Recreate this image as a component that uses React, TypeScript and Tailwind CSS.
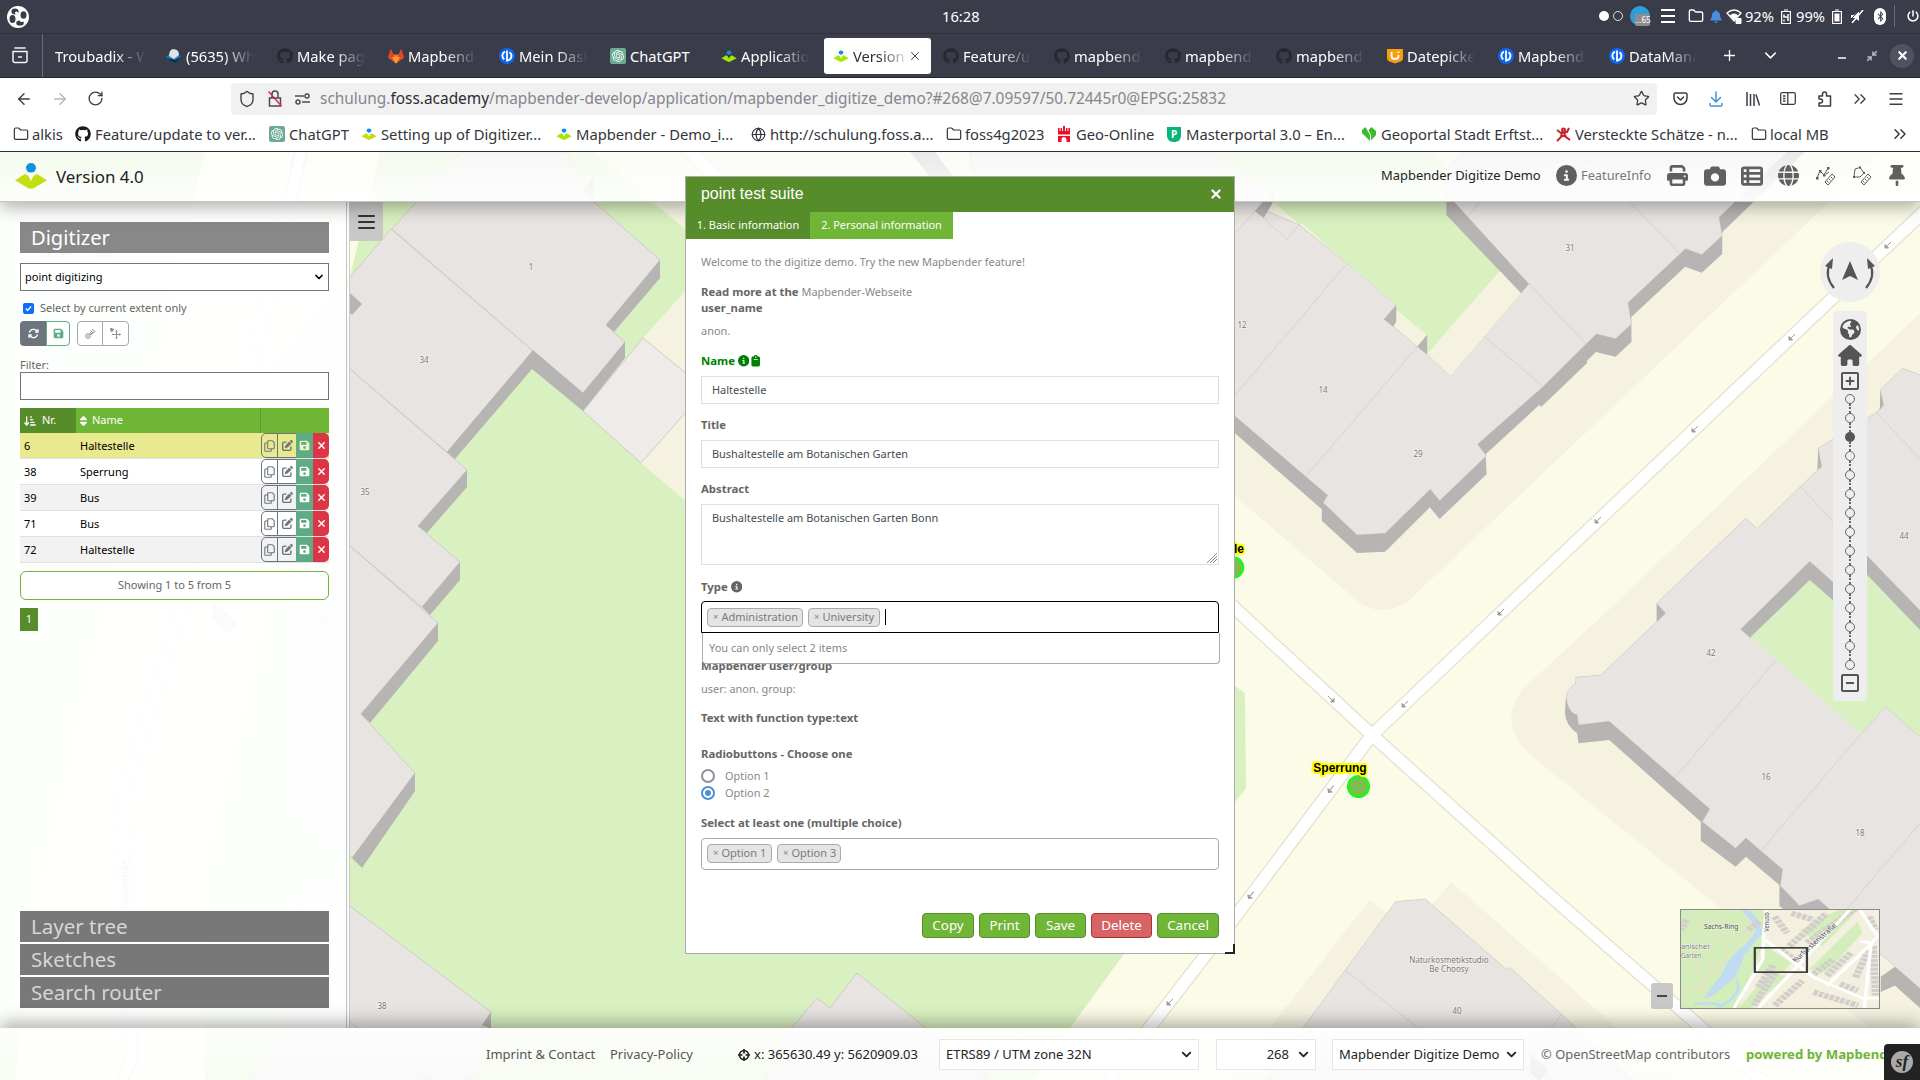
import React from "react";
import {
  FaPrint, FaCamera, FaTableList, FaGlobe, FaThumbtack, FaCircleInfo, FaEarthAmericas, FaHouse,
  FaArrowsRotate, FaFloppyDisk, FaArrowDownShortWide, FaSort, FaPenToSquare, FaXmark,
  FaClipboard, FaGithub, FaPowerOff, FaBell, FaBluetoothB,
} from "react-icons/fa6";
import { SiOpenai } from "react-icons/si";
import {
  ArrowLeft, ArrowRight, RotateCw, Shield, Star, Folder, Globe, ChevronDown, ChevronsRight, Menu,
  Plus, X, Minimize2,
} from "lucide-react";

/* ---------- small logos ---------- */

function MapbenderLogo({ className, lime = "#a2e800" }: { className: string; lime?: string }) {
  return (
    <svg viewBox="0 0 34 28" className={className} preserveAspectRatio="none">
      <path d="M1 19 L11 12.5 Q15 14 16 18 L17 20 L18 18 Q19 14 23 12.5 L33 19 L20 27 Q17 28.5 14 27 Z" fill={lime} />
      <circle cx="17" cy="6" r="5" fill="#0a93dd" />
    </svg>
  );
}

function GitlabLogo() {
  return (
    <svg viewBox="0 0 16 16" className="h-4 w-4">
      <path d="M8 15.5 L.3 9.6 L2.8 1 L5.2 6.4 H10.8 L13.2 1 L15.7 9.6 Z" fill="#fc6d26" />
      <path d="M8 15.5 L5.2 6.4 L2.8 1 L.3 8 Z" fill="#e24329" />
      <path d="M8 15.5 L10.8 6.4 L13.2 1 L15.7 8 Z" fill="#e24329" />
      <path d="M8 15.5 L4 9.6 L8 8.2 L12 9.6 Z" fill="#fca326" />
    </svg>
  );
}

function DashLogo() {
  return (
    <svg viewBox="0 0 16 16" className="h-4 w-4">
      <circle cx="8" cy="8" r="8" fill="#0b66f0" />
      <path d="M8 3.2 V12.8" stroke="#fff" strokeWidth="1.8" strokeLinecap="round" />
      <path d="M6 3.600 A4.500 4.500 0 0 0 5.3 11.4 M10.5 4.2 A4.500 4.500 0 0 1 8 12.4" stroke="#fff" strokeWidth="1.9" fill="none" />
    </svg>
  );
}

function ChatLogo() {
  return (
    <span className="flex h-4 w-4 items-center justify-center rounded-[2px] bg-[#6bab94] text-[12px] text-white">
      <SiOpenai />
    </span>
  );
}

function PickerLogo() {
  return (
    <svg viewBox="0 0 16 16" className="h-4 w-4">
      <path d="M0 1 H16 V10 Q16 13 12 14 L8 15.5 L4 14 Q0 13 0 10 Z" fill="#f99d0b" />
      <path d="M4.5 4 V8 Q4.5 11 8 11 Q11.5 11 11.5 8 V7 M11.5 3.6 V5" stroke="#fff" strokeWidth="2" fill="none" />
    </svg>
  );
}

function MailLogo() {
  return (
    <svg viewBox="0 0 16 16" className="h-4 w-4">
      <path d="M0 9 L5 5 L15 8 L9 15 Z" fill="#0e7fc4" />
      <path d="M1 10 L9 15 L15 9 L9 12 Z" fill="#0b2b44" />
      <path d="M3 8 Q3 2 7 1 Q13 1 13 7 L8 11 Z" fill="#dfe3e8" />
    </svg>
  );
}

function CastleLogo() {
  return (
    <svg viewBox="0 0 14 16" className="h-4 w-3.5" fill="#f00d27">
      <path d="M1 2h1.500v3h1V2h1.500v3h1V0h2v5h1V2h1.500v3h1V2H13v6.500H1zM1 10h12v6H9.500v-2.500a2.500 2.500 0 0 0-5 0V16H1z" />
    </svg>
  );
}

/* ---------- desktop and browser bars ---------- */

function SystemBar() {
  return (
    <div className="flex h-[34px] items-center border-b border-[#2d303d] bg-[#3a3c4a] text-[14.7px] text-white">
      <div className="flex w-[942px] items-center pl-[7px]">
        <svg viewBox="0 0 22 22" className="h-[22px] w-[22px]">
          <circle cx="11" cy="11" r="11" fill="#fff" />
          <g fill="#3a3c4a">
            <ellipse cx="8" cy="5.500" rx="3.600" ry="3" />
            <ellipse cx="16.500" cy="9" rx="3" ry="3.800" />
            <ellipse cx="5.500" cy="13" rx="3" ry="4" />
            <ellipse cx="13" cy="17" rx="3.800" ry="2.600" />
          </g>
          <circle cx="9.500" cy="7" r="1.600" fill="#fff" />
          <circle cx="14.500" cy="14.500" r="1.600" fill="#fff" />
        </svg>
      </div>
      <div>16:28</div>
      <div className="flex flex-1 items-center justify-end">
        <span className="h-[10px] w-[10px] rounded-full bg-white" />
        <span className="ml-[4px] h-[10px] w-[10px] rounded-full border border-white/80" />
        <span className="relative ml-[7px] h-[20px] w-[20px] rounded-full bg-[#2c9fd4]">
          <span className="absolute top-[8px] left-[5px] h-[12px] w-[15px] rounded-[2px] bg-[#8d8d8d] text-[8px] leading-[12px] text-white">...65</span>
        </span>
        <span className="ml-[11px] flex w-[14px] flex-col gap-[4px]">
          <i className="h-[2px] bg-white" /><i className="h-[2px] bg-white" /><i className="h-[2px] bg-white" />
        </span>
        <Folder className="ml-[13px] h-[16px] w-[16px]" strokeWidth={2} />
        <FaBell className="ml-[6px] h-[13px] w-[12px] text-[#4a8fdc]" />
        <svg viewBox="0 0 16 15" className="ml-[4px] h-[15px] w-[16px]" fill="none" stroke="#fff">
          <path d="M1 4 Q8 -2 15 4 L8 12 Z" strokeWidth="1.300" />
          <path d="M4 6.500 Q8 3 12 6.500 L8 11 Z" fill="#fff" strokeWidth=".5" />
          <path d="M10 9.500 h5 v5 h-5z" fill="#fff" />
        </svg>
        <span className="ml-[3px]">92%</span>
        <svg viewBox="0 0 10 15" className="ml-[7px] h-[15px] w-[10px]" fill="none" stroke="#fff">
          <path d="M.6 2.500 h8.800 v12 H.6z M3 1 h4" strokeWidth="1.200" />
          <path d="M3 5.500 v2.500 h4 v4 M7 5 v2 M3 10.500 v2" strokeWidth="1.500" />
        </svg>
        <span className="ml-[5px]">99%</span>
        <svg viewBox="0 0 10 15" className="ml-[7px] h-[15px] w-[10px]" fill="none" stroke="#fff">
          <path d="M.6 2.500 h8.800 v12 H.6z M3 1 h4" strokeWidth="1.200" />
          <path d="M2.500 4.500 h5 v8 h-5z" fill="#fff" stroke="none" />
        </svg>
        <svg viewBox="0 0 13 13" className="ml-[9px] h-[13px] w-[13px]" fill="#fff">
          <path d="M0 5 h3 L8 1 V11 L4 8 H0z" />
          <path d="M12 0 L1 13" stroke="#fff" strokeWidth="1.500" />
          <path d="M0 9 L9 0" stroke="#3a3c4a" strokeWidth="1" />
        </svg>
        <span className="ml-[10px] flex h-[17px] w-[12px] items-center justify-center rounded-full bg-white text-[11px] text-[#3a3c4a]"><FaBluetoothB /></span>
        <span className="ml-[8px] h-[22px] w-px bg-[#6a6c78]" />
        <FaPowerOff className="ml-[12px] h-[12px] w-[12px]" />
        <span className="w-px" />
      </div>
    </div>
  );
}

const tabs: { label: string; icon: React.ReactNode; active?: boolean }[] = [
  { label: "Troubadix - Web", icon: null },
  { label: "(5635) WhatsApp", icon: <MailLogo /> },
  { label: "Make page work", icon: <FaGithub className="h-4 w-4 text-[#24292e]" /> },
  { label: "Mapbender", icon: <GitlabLogo /> },
  { label: "Mein Dashboard", icon: <DashLogo /> },
  { label: "ChatGPT", icon: <ChatLogo /> },
  { label: "Applications", icon: <MapbenderLogo className="h-3 w-4" /> },
  { label: "Version 4.0", icon: <MapbenderLogo className="h-3 w-4" />, active: true },
  { label: "Feature/update", icon: <FaGithub className="h-4 w-4 text-[#24292e]" /> },
  { label: "mapbender", icon: <FaGithub className="h-4 w-4 text-[#24292e]" /> },
  { label: "mapbender", icon: <FaGithub className="h-4 w-4 text-[#24292e]" /> },
  { label: "mapbender", icon: <FaGithub className="h-4 w-4 text-[#24292e]" /> },
  { label: "Datepicker", icon: <PickerLogo /> },
  { label: "Mapbender", icon: <DashLogo /> },
  { label: "DataManager", icon: <DashLogo /> },
];

function TabBar() {
  return (
    <div className="flex h-[44px] items-center border-b border-[#23252f] bg-[#3a3c4a] text-[14.7px] text-white">
      <div className="flex h-full w-[43px] items-center border-r border-[#6b6d78] pl-[12px]">
        <svg viewBox="0 0 16 17" className="h-[17px] w-[16px]" fill="none" stroke="#f3f3f5" strokeWidth="1.500" strokeLinecap="round" strokeLinejoin="round">
          <path d="M3 1 h10 M1 4.500 h14 v9 a2 2 0 0 1 -2 2 H3 a2 2 0 0 1 -2 -2z M6.500 10 h3" />
        </svg>
      </div>
      <div className="flex pl-[2px]">
        {tabs.map((t, i) => (
          <div key={i} className="w-[111px] px-[2px]">
            <div className={t.active ? "flex h-[36px] items-center rounded-[3px] bg-white pl-[9px] text-[#2f303a]" : "flex h-[36px] items-center pl-[8px]"}>
              {t.icon && <span className="mr-[4px] flex w-4 shrink-0 justify-center">{t.icon}</span>}
              <span className={t.active
                ? "w-[53px] overflow-hidden pt-[2px] [mask-image:linear-gradient(90deg,#000_50%,transparent_108%)] whitespace-nowrap"
                : t.label === "ChatGPT" ? "pt-[2px] whitespace-nowrap"
                : t.icon ? "w-[68px] overflow-hidden pt-[2px] [mask-image:linear-gradient(90deg,#000_55%,transparent_100%)] whitespace-nowrap"
                : "w-[91px] overflow-hidden pt-[2px] [mask-image:linear-gradient(90deg,#000_65%,transparent_100%)] whitespace-nowrap"}>{t.label}</span>
              {t.active && <X className="ml-[2px] h-[14px] w-[14px] shrink-0" strokeWidth={1.6} />}
            </div>
          </div>
        ))}
      </div>
      <Plus className="ml-[11px] h-[17px] w-[17px]" strokeWidth={1.8} />
      <ChevronDown className="ml-[23px] h-[19px] w-[19px]" strokeWidth={1.8} />
      <div className="flex flex-1 items-center justify-end pr-[6px]">
        <span className="mt-[4px] h-[2px] w-[8px] bg-[#c8c9ce]" />
        <Minimize2 className="ml-[20px] h-[12px] w-[12px] text-[#b9bac1]" strokeWidth={3} />
        <span className="ml-[12px] flex h-[24px] w-[24px] items-center justify-center rounded-full bg-[#50525f]"><X className="h-[13px] w-[13px]" strokeWidth={4} /></span>
      </div>
    </div>
  );
}

function AddressBar() {
  return (
    <div className="flex h-[41px] items-center bg-white text-[#3c3d46]">
      <ArrowLeft className="ml-[15px] h-[18px] w-[18px]" strokeWidth={1.9} />
      <ArrowRight className="ml-[18px] h-[18px] w-[18px] text-[#b5b5b9]" strokeWidth={1.9} />
      <RotateCw className="ml-[18px] h-[17px] w-[17px]" strokeWidth={1.9} />
      <div className="ml-[127px] flex h-[32px] w-[1426px] items-center rounded-[4px] bg-[#f1f1f2]">
        <Shield className="ml-[7px] h-[18px] w-[18px]" strokeWidth={1.8} />
        <svg viewBox="0 0 14 17" className="ml-[12px] h-[17px] w-[14px]" fill="none" stroke="#4b4c55" strokeWidth="1.500">
          <path d="M1.500 8 h11 v8 h-11z M4 8 V4 a3 3 0 0 1 6 0 V8" />
          <path d="M.5 1.500 L13.500 16" stroke="#e22850" />
        </svg>
        <svg viewBox="0 0 15 12" className="ml-[13px] h-[12px] w-[15px]" fill="none" stroke="#4b4c55" strokeWidth="1.500">
          <path d="M0 3 h9 M7 9 h8" /><circle cx="12" cy="3" r="2" /><circle cx="3" cy="9" r="2" />
        </svg>
        <span className="ml-[10px] flex-1 text-[15.42px] whitespace-nowrap text-[#85868c]">schulung.<span className="text-[#2c2d35]">foss.academy</span>/mapbender-develop/application/mapbender_digitize_demo?#268@7.09597/50.72445r0@EPSG:25832</span>
        <Star className="mr-[7px] h-[17px] w-[17px]" strokeWidth={1.8} />
      </div>
      <svg viewBox="0 0 15 14" className="ml-[16px] h-[14px] w-[15px]" fill="none" stroke="#3c3d46" strokeWidth="1.500" strokeLinecap="round" strokeLinejoin="round">
        <path d="M2.500 1 h10 a1.500 1.500 0 0 1 1.500 1.500 V6 a6.500 6.500 0 0 1 -13 0 V2.500 A1.500 1.500 0 0 1 2.500 1z M4.500 5 l3 3 l3 -3" />
      </svg>
      <svg viewBox="0 0 14 16" className="ml-[21px] h-[16px] w-[14px]" fill="none" stroke="#4a90d9" strokeWidth="1.500" strokeLinecap="round" strokeLinejoin="round">
        <path d="M7 1 V10.500 M2.500 6.500 L7 11 L11.500 6.500 M1 12.500 V14 a1 1 0 0 0 1 1 H12 a1 1 0 0 0 1 -1 V12.500" />
      </svg>
      <svg viewBox="0 0 14 14" className="ml-[23px] h-[14px] w-[14px]" fill="none" stroke="#3c3d46" strokeWidth="1.500">
        <path d="M1 0 V14 M4.500 2 V14 M8 2 V14 M10 2.500 L13.500 13.500" />
      </svg>
      <svg viewBox="0 0 16 13" className="ml-[20px] h-[13px] w-[16px]" fill="none" stroke="#3c3d46" strokeWidth="1.300">
        <rect x=".7" y=".7" width="14.600" height="11.600" rx="1.500" /><path d="M7.800 1 V12 M3 4 h2.500 M3 6.500 h2.500 M3 9 h2.500" />
      </svg>
      <svg viewBox="0 0 15 16" className="ml-[21px] h-[16px] w-[15px]" fill="none" stroke="#3c3d46" strokeWidth="1.500" strokeLinejoin="round">
        <path d="M5.500 5 V3 a2 2 0 0 1 4 0 V5 H13.500 V15 H2 V12 H3.500 a2 2 0 0 0 0 -4 H2 V5 Z" />
      </svg>
      <ChevronsRight className="ml-[18px] h-[20px] w-[20px]" strokeWidth={1.6} />
      <Menu className="ml-[17px] h-[18px] w-[18px]" strokeWidth={1.7} />
    </div>
  );
}

function BookmarkBar() {
  const f = <Folder className="h-[16px] w-[16px]" strokeWidth={1.8} />;
  return (
    <div className="flex h-[33px] items-center border-b border-[#2c2e3a] bg-white pb-[2px] pl-[13px] text-[14.75px] whitespace-nowrap text-[#33343c]">
      <span className="flex w-[62px] items-center gap-[3px]">{f}alkis</span>
      <span className="flex w-[194px] items-center gap-[4px]"><FaGithub className="h-4 w-4 text-[#1a1a1a]" />Feature/update to ver...</span>
      <span className="flex w-[92px] items-center gap-[4px]"><ChatLogo />ChatGPT</span>
      <span className="flex w-[195px] items-center gap-[4px]"><MapbenderLogo className="h-3 w-4" lime="#c3df10" />Setting up of Digitizer...</span>
      <span className="flex w-[195px] items-center gap-[4px]"><MapbenderLogo className="h-3 w-4" />Mapbender - Demo_i...</span>
      <span className="flex w-[195px] items-center gap-[4px]"><Globe className="h-[15px] w-[15px]" strokeWidth={1.9} />http://schulung.foss.a...</span>
      <span className="flex w-[111px] items-center gap-[3px]">{f}foss4g2023</span>
      <span className="flex w-[110px] items-center gap-[5px]"><CastleLogo />Geo-Online</span>
      <span className="flex w-[195px] items-center gap-[5px]">
        <span className="flex h-[15px] w-[14px] items-center justify-center rounded-b-[6px] bg-[#08b479] text-[10px] font-bold text-white">P</span>Masterportal 3.0 – En...
      </span>
      <span className="flex w-[194px] items-center gap-[5px]">
        <svg viewBox="0 0 14 14" className="h-[14px] w-[14px]" fill="#3bbb2d"><path d="M0 3 L3.500 0 L8 8 V14 L0 6z M6.500 3 L9.500 0 L14 4 V8 L9 13.500 V8z" /></svg>Geoportal Stadt Erftst...
      </span>
      <span className="flex w-[195px] items-center gap-[4px]">
        <svg viewBox="0 0 15 15" className="h-[15px] w-[15px]" fill="none" stroke="#c8232c" strokeWidth="2"><path d="M1 3 L5 6 L11 5 L13 1 M6 5 L5 10 L1 14 M8 6 L10 10 L14 13 M5 9 H10" /><circle cx="7.500" cy="3" r="1.500" /></svg>Versteckte Schätze - n...
      </span>
      <span className="flex items-center gap-[3px]">{f}local MB</span>
      <ChevronsRight className="mr-[10px] ml-auto h-[20px] w-[20px]" strokeWidth={1.7} />
    </div>
  );
}

/* ---------- map ---------- */

const GREEN = "#d9f1c0";
const CREAM = "#f5f3e0";
const HOUSE = "#e8e4e1";
const SHADE = "#b7b5b3";
const EDGE = "#cfcbc7";

const numbers: [number, number, string][] = [
  [531, 267, "1"], [424, 360, "34"], [365, 492, "35"], [382, 1006, "38"], [1242, 325, "12"], [1323, 390, "14"],
  [1418, 454, "29"], [1570, 248, "31"], [1904, 536, "44"], [1711, 653, "42"], [1766, 777, "16"], [1860, 833, "18"],
  [1457, 1011, "40"], [323, 620, "36"],
];

const arrows: [number, number, number][] = [
  [1888, 245, 0], [1792, 337, 0], [1695, 429, 0], [1598, 520, 0], [1501, 612, 0], [1405, 704, 0], [1331, 789, 8], [1251, 895, 8], [1170, 1002, 0],
  [1331, 699, 90],
];

function MapCanvas() {
  return (
    <svg viewBox="0 152 1920 928" className="absolute inset-0 h-full w-full" preserveAspectRatio="none">
      <rect x="0" y="152" width="1920" height="928" fill="#fcfbe7" />
      {/* park */}
      <path d="M0 152 H850 L1000 400 L1235 686 L1245 693 L1246 788 L1235 802 L1124 954 L1032 1080 H0 Z" fill={GREEN} />
      <path d="M205 152 H380 L205 880 V1080 H15 L40 880 Z" fill="#fcfbe7" />
      <path d="M301 152 L240 420 L122 800 L132 1060 L122 1080" fill="none" stroke="#dddcd0" strokeWidth="13" />
      <path d="M301 152 L240 420 L122 800 L132 1060 L122 1080" fill="none" stroke="#fff" strokeWidth="10" />
      <path d="M593 152 L686 230 V290 L643 338 L583 411 L641 463 L686 501 L1235 615 V152 Z" fill={CREAM} />
      <path d="M686 500 V954 H1124 L1235 802 V700 Z" fill={GREEN} />

      {/* western buildings */}
      <g stroke={EDGE} strokeWidth="1">
        <path d="M461 152 L567 152 L594 202 L660 260 L606 325 L625 342 L583 393 L533 351 L392 229 Z" fill={HOUSE} />
        <path d="M391 229 L533 351 L447 452 L350 369 L250 480 V395 Z" fill={HOUSE} />
        <path d="M350 369 L467 470 L418 526 L460 562 L422 607 L350 546 L250 470 Z" fill={HOUSE} />
        <path d="M350 546 L438 623 L361 714 L415 773 L352 858 L290 800 V530 Z" fill={HOUSE} />
        <path d="M350 906 L491 1012 L482 1028 L491 1045 L470 1080 H250 L290 1030 L280 960 L310 880 Z" fill={HOUSE} />
        <path d="M350 1022 L430 1080" />
        <path d="M643 338 L700 385 V396 L641 463 L583 411 Z" fill="#efebe9" />
        <path d="M783 1038 L817 998 L830 1008 L857 973 L985 1075 V1080 H765 Z" fill={HOUSE} />
      </g>
      <g fill={SHADE}>
        <path d="M660 260 V278 L614 332 L606 325 Z" />
        <path d="M625 342 V358 L583 411 L532 369 L455 459 L447 452 L533 350 L583 393 Z" />
        <path d="M467 470 V487 L427 533 L418 526 Z" />
        <path d="M460 562 V580 L430 615 L422 607 Z" />
        <path d="M438 623 V641 L370 723 L361 714 Z" />
        <path d="M415 773 V791 L362 868 L352 858 Z" />
        <path d="M350 293 L362 304 L352 315 L350 314 Z" />
        <path d="M491 1012 V1029 L482 1025 Z" />
        <path d="M593 178 V200 L582 192 Z" />
        <path d="M212 601 L238 624 L228 634 L212 619 Z" />
        <path d="M910 152 H935 L972 202 H950 Z" />
      </g>
      <path d="M352 314 L350 317 V314 Z" fill={GREEN} />

      {/* eastern half, drawn in its own units */}
      <g transform="translate(1220 190) scale(0.44643 0.33333)">
        <path d="M-600 -114 H1480 L1365 36 L420 1235 Q360 1285 310 1235 L0 880 L-600 60 Z" fill={CREAM} />
        <path d="M1640 300 L1568 370 L870 1260 L680 1495 Q630 1580 670 1660 L690 1690 L1480 2540 L1640 2680 Z" fill={CREAM} />
        <path d="M15 2680 L335 2130 L375 2170 L480 2140 L517 2075 L1030 2680 Z" fill={CREAM} />
        {/* north-western block */}
        <g fill={HOUSE} stroke={EDGE} strokeWidth="2">
          <path d="M-560 -114 H10 L118 20 L100 60 L178 105 L285 220 L395 345 L370 388 L442 470 L464 435 L462 490 L517 558 L673 310 L692 282 L507 20 V-60 L540 -114 H1270 L1118 82 L1125 137 L1079 194 L1043 176 L914 338 L922 402 L886 446 L843 432 L720 595 L577 763 L597 797 L492 932 L471 898 L370 1030 L307 1035 L231 938 L241 916 L34 679 L-560 -60 Z" />
        </g>
        <path d="M-10 -114 L120 36 L178 104 L182 98 L285 220 L395 345 V360 L464 435 V494 L627 243 L507 75 V-60 L480 -114 Z" fill={GREEN} />
        <g fill={SHADE}>
          <path d="M1270 -114 H1310 L1125 127 V192 L1079 248 L1042 230 L921 382 L922 455 L886 500 L842 486 L822 512 V520 L720 650 L715 645 L595 793 L597 853 L492 987 L470 952 L370 1085 L307 1089 L228 992 V958 L0 690 V635 L34 679 L241 916 L231 938 L307 1035 L370 1030 L471 898 L492 932 L597 797 L577 763 L720 595 L843 432 L886 446 L922 402 L914 338 L1043 176 L1079 194 L1125 137 L1118 82 Z" />
          <path d="M507 10 L692 282 L674 310 L507 75 Z" />
          <path d="M119 0 V36 L98 84 L78 64 Z" />
          <path d="M395 345 V395 L388 410 L367 388 Z" />
          <path d="M464 435 V494 L442 470 Z" />
        </g>
        <path d="M464 492 L627 243 L674 310 L517 558 Z" fill={CREAM} />
        <g fill="none" stroke="#c9c6c2" strokeWidth="1.500">
          <path d="M78 64 L34 130 M98 84 L150 148 L182 98 M285 220 L34 615 M442 470 L193 858 M593 440 L720 585 M692 282 L822 465 M553 82 L640 -60 M810 -114 L1028 188" />
        </g>
        {/* eastern block */}
        <path d="M1640 590 L1568 555 L1529 535 L1479 600 L1485 645 L1470 668 L1340 775 L1346 830 L1300 890 L1203 1016 L1178 985 L978 1240 L998 1270 L853 1455 L797 1462 V1480 Q770 1505 777 1540 Q785 1570 800 1578 L803 1605 L872 1595 L1097 1857 L1080 1895 L1155 1975 L1178 1945 L1260 2038 L1255 2087 L1298 2147 L1340 2128 L1640 2480 Z" fill={HOUSE} stroke={EDGE} strokeWidth="2" />
        <g fill={SHADE}>
          <path d="M978 1240 L998 1270 L978 1296 Z" />
          <path d="M1479 600 L1487 645 L1478 660 Z M1340 775 L1348 830 L1338 840 Z" />
          <path d="M775 1520 Q780 1570 800 1573 L803 1605 L872 1594 L1097 1857 L1080 1895 L1155 1975 L1178 1944 L1260 2038 L1255 2087 L1298 2147 L1340 2128 L1365 2157 L1320 2175 L1298 2200 L1253 2147 V2085 L1178 2000 L1155 2030 L1077 1952 V1895 L872 1650 L803 1660 L800 1630 Q770 1600 773 1560 Z" />
          <path d="M1166 1318 L1321 1114 L1385 1190 L1450 1098 L1600 1305 V1380 L1188 1344 Z" />
        </g>
        <path d="M1480 2360 L1512 2330 L1640 2480 V2560 L1512 2387 L1480 2407 Z" fill={SHADE} />
        <path d="M1480 2407 L1512 2387 L1640 2540 V2680 H1480 Z" fill={CREAM} />
        <path d="M1188 1342 L1321 1170 L1385 1245 L1450 1155 L1600 1365 V1680 L1568 1640 L1491 1550 L1436 1632 Z" fill={GREEN} />
        <g fill="none" stroke="#c9c6c2" strokeWidth="1.500">
          <path d="M1470 668 L1600 850 M1300 890 L1420 1060 M1245 1412 L1017 1765 M1436 1632 L1213 1980 M1600 1850 L1405 2155 M1436 1632 L1491 1550 L1600 1678" />
        </g>
        {/* Naturkosmetik building */}
        <path d="M95 2680 L185 2515 L393 2135 L460 2127 L643 2340 L650 2333 L935 2680 Z" fill={HOUSE} stroke={EDGE} strokeWidth="2" />
        <path d="M280 2340 L600 2680 M766 2472 L640 2680" stroke="#c9c6c2" strokeWidth="1.500" fill="none" />
        <path d="M695 2590 L735 2640 L715 2672 L695 2650 Z" fill={SHADE} />
      </g>

      {/* streets */}
      <g fill="none" strokeLinejoin="round">
        <g stroke="#e3e1cf" strokeWidth="14">
          <path d="M1935 201 L1372 735 L1235 917 L1100 1092" />
          <path d="M1200 576 L1372 735 L1547 893 L1775 1092" />
          <path d="M640 100 L740 202" />
        </g>
        <g stroke="#fff" strokeWidth="11.500">
          <path d="M1935 201 L1372 735 L1235 917 L1100 1092" />
          <path d="M1200 576 L1372 735 L1547 893 L1775 1092" />
          <path d="M640 100 L740 202" />
        </g>
      </g>
      {arrows.map(([x, y, r], i) => (
        <path key={i} transform={`translate(${x} ${y}) rotate(${-r})`} d="M3 -3 L-2.500 2.500 M-3 3 V-.5 L.5 3 Z" stroke="#9c9c96" fill="#9c9c96" strokeWidth="1" />
      ))}

      <g fontFamily="'Noto Sans', sans-serif" fontSize="8" fill="#7d7975" textAnchor="middle" stroke="#f3f1ef" strokeWidth="1.500" paintOrder="stroke">
        {numbers.map(([x, y, n]) => <text key={n} x={x} y={y + 3}>{n}</text>)}
        <text x="1449" y="963" fontSize="8">Naturkosmetikstudio</text>
        <text x="1449" y="972" fontSize="8">Be Choosy</text>
        <text x="78" y="258" fontSize="13">Scale 1 : 268</text>
        <text transform="translate(122 895) rotate(90)" fontSize="10">Venusbergweg</text>
      </g>

      {/* digitized points */}
      <g fill="#7cbd4b" stroke="#1cf71c" strokeWidth="2.500">
        <circle cx="1233" cy="567.500" r="10" />
        <circle cx="1358.500" cy="786.500" r="10.300" />
      </g>
      <g fontFamily="'Liberation Sans', sans-serif" fontSize="12" fontWeight="bold" fill="#000" stroke="#ff0" strokeWidth="4" strokeLinejoin="round" paintOrder="stroke">
        <text x="1340" y="772" textAnchor="middle">Sperrung</text>
        <text x="1244" y="553" textAnchor="end">Haltestelle</text>
      </g>
    </svg>
  );
}

/* ---------- application bars ---------- */

function Measure({ area }: { area?: boolean }) {
  return (
    <svg viewBox="0 0 20 20" className="h-[20px] w-[20px]" fill="none" stroke="#5c5c5c" strokeWidth="1">
      {area ? <path d="M2 11 L3 3 L8 1.500 L12 7 L8 11 Z" /> : <path d="M1 12 L4 5 L8 9 L12 2 M10 8 L13 6" />}
      <g fill="#5c5c5c" stroke="none">
        {area
          ? <><rect x="1" y="10" width="2" height="2" /><rect x="7" y=".5" width="2" height="2" /><rect x="11" y="6" width="2" height="2" /></>
          : <><rect x="0" y="11" width="2.500" height="2.500" /><rect x="3" y="4" width="2.500" height="2.500" /><rect x="7" y="8" width="2.500" height="2.500" /><rect x="11" y="1" width="2.500" height="2.500" /></>}
      </g>
      <path d="M9 16 L16 8 L19 11 L12 19 Z M11 15 l1.500 1.500 M13 13 l1.500 1.500 M15 11 l1.500 1.500" />
    </svg>
  );
}

function AppHeader() {
  return (
    <div className="z-10 flex h-[50px] items-center border-b border-[#c3c6c4] bg-linear-to-b from-white/70 to-white/95 pb-[2px] text-[#606060] shadow-[0_5px_18px_rgba(0,0,0,0.32)]">
      <MapbenderLogo className="ml-[14px] h-[27px] w-[34px]" lime="#c3df10" />
      <span className="mt-[2px] ml-[8px] text-[16.9px] text-[#222]">Version 4.0</span>
      <div className="ml-auto flex items-center">
        <span className="w-[175px] text-[12.95px] whitespace-nowrap text-[#222]">Mapbender Digitize Demo</span>
        <FaCircleInfo className="h-[21px] w-[21px]" />
        <span className="ml-[4px] w-[86px] text-[12.8px] text-[#777]">FeatureInfo</span>
        <FaPrint className="h-[21px] w-[21px]" />
        <FaCamera className="ml-[16px] h-[22px] w-[22px]" />
        <FaTableList className="ml-[15px] h-[22px] w-[22px]" />
        <FaGlobe className="ml-[15px] h-[21px] w-[21px]" />
        <span className="ml-[17px]"><Measure /></span>
        <span className="ml-[16px]"><Measure area /></span>
        <FaThumbtack className="mr-[13px] ml-[15px] h-[21px] w-[20px]" />
      </div>
    </div>
  );
}

function AppFooter() {
  const box = "flex h-[31px] items-center justify-between border border-[#e6e6e6] bg-white pl-[6px] pr-[4px] text-[#212529] whitespace-nowrap";
  return (
    <div className="z-10 flex h-[52px] items-center bg-linear-to-b from-white/95 to-white/80 pt-px pl-[486px] text-[13px] whitespace-nowrap text-[#555] shadow-[0_-5px_18px_rgba(0,0,0,0.32)]">
      <span className="w-[124px]">Imprint &amp; Contact</span>
      <span className="w-[128px]">Privacy-Policy</span>
      <svg viewBox="0 0 12 12" className="h-[12px] w-[12px]" fill="none" stroke="#222" strokeWidth="1.700"><circle cx="6" cy="6" r="4.500" /><path d="M6 0 V4.500 M6 7.500 V12 M0 6 H4.500 M7.500 6 H12" /></svg>
      <span className="ml-[4px] w-[185px] text-[#222]">x: 365630.49 y: 5620909.03</span>
      <div className={box + " w-[260px]"}>ETRS89 / UTM zone 32N<ChevronDown className="h-[15px] w-[15px]" strokeWidth={3} /></div>
      <div className={box + " ml-[17px] w-[100px]"}><span className="flex-1 pr-[7px] text-right">268</span><ChevronDown className="h-[15px] w-[15px]" strokeWidth={3} /></div>
      <div className={box + " ml-[16px] w-[192px]"}>Mapbender Digitize Demo<ChevronDown className="h-[15px] w-[15px] shrink-0" strokeWidth={3} /></div>
      <span className="ml-[17px] w-[205px] text-[12.95px] text-[#666]">© OpenStreetMap contributors</span>
      <span className="w-[138px] overflow-hidden text-[13.2px] font-bold text-[#6fb536]">powered by Mapbender</span>
      <div className="-mt-px flex h-[36px] flex-1 items-center justify-center self-end rounded-tl-[4px] bg-[#222]">
        <span className="flex h-[22px] w-[22px] items-center justify-center rounded-full bg-[#aaa] pb-[2px] font-['Liberation_Serif'] text-[17px] leading-none font-bold text-[#222] italic">sf</span>
      </div>
    </div>
  );
}

/* ---------- sidebar ---------- */

function CopyIcon() {
  return (
    <svg viewBox="0 0 11 12" className="h-[12px] w-[11px]" fill="none" stroke="currentColor" strokeWidth="1.100" strokeLinejoin="round">
      <path d="M4.500 .8 H8.300 L10.200 2.700 V8 a.8 .8 0 0 1 -.8 .8 H4.500 a.8 .8 0 0 1 -.8 -.8 V1.600 a.8 .8 0 0 1 .8 -.8z M3.700 3 H1.600 a.8 .8 0 0 0 -.8 .8 V10.400 a.8 .8 0 0 0 .8 .8 H6.500 a.8 .8 0 0 0 .8 -.8 V9" />
    </svg>
  );
}

const rows: [string, string][] = [["6", "Haltestelle"], ["38", "Sperrung"], ["39", "Bus"], ["71", "Bus"], ["72", "Haltestelle"]];

function Sidebar() {
  return (
    <div className="relative flex w-[350px] flex-col border-r border-[#c9cacb] bg-white/94 pl-[20px] text-[11px] text-[#666]">
      <div className="flex h-full w-[327px] flex-col border-r border-[#bfc1c3] pr-[17px]">
        <div className="mt-[20px] flex h-[31px] items-center bg-[#888] pt-px pl-[11px] text-[20.1px] text-white">Digitizer</div>
        <div className="mt-[10px] flex h-[28px] items-center justify-between border border-[#757575] bg-white pr-[3px] pl-[4px] text-black">point digitizing<ChevronDown className="h-[12px] w-[12px]" strokeWidth={3.5} /></div>
        <div className="mt-[9px] flex h-[16px] items-center pl-[3px]">
          <span className="flex h-[11px] w-[11px] items-center justify-center rounded-[2px] bg-[#0d6efd]"><svg viewBox="0 0 8 8" className="h-[7px] w-[7px]"><path d="M1 4 L3 6.300 L7 1.700" stroke="#fff" strokeWidth="1.600" fill="none" /></svg></span>
          <span className="ml-[6px]">Select by current extent only</span>
        </div>
        <div className="mt-[5px] flex h-[25px]">
          <span className="flex w-[26px] items-center justify-center rounded-l-[4px] bg-[#6c757d] text-[11px] text-white"><FaArrowsRotate /></span>
          <span className="flex w-[24px] items-center justify-center rounded-r-[4px] border border-[#5fab86] bg-white text-[11px] text-[#5fab86]"><FaFloppyDisk /></span>
          <span className="ml-[7px] flex w-[26px] items-center justify-center rounded-l-[4px] border border-[#a4a9ad] bg-white">
            <svg viewBox="0 0 11 11" className="h-[11px] w-[11px]" fill="none" stroke="#8e9499"><circle cx="3" cy="8" r="2.300" /><circle cx="3" cy="8" r=".5" /><path d="M4.500 6 L8 1.500 L10 3.500 L6 6.500 M8 4 L5 7" /></svg>
          </span>
          <span className="-ml-px flex w-[27px] items-center justify-center rounded-r-[4px] border border-[#a4a9ad] bg-white">
            <svg viewBox="0 0 11 11" className="h-[11px] w-[11px]" fill="none" stroke="#8e9499"><path d="M6.500 2 V11 M2 6.500 H11 M5.500 9.500 L6.500 10.500 L7.500 9.500 M9.500 5.500 L10.500 6.500 L9.500 7.500 M5.500 3.500 L6.500 2.500 L7.500 3.500" /><path d="M0 0 L4 1.500 L1.500 4 Z" fill="#8e9499" /></svg>
          </span>
        </div>
        <div className="mt-[10px] h-[16px] leading-[17px]">Filter:</div>
        <div className="h-[28px] border border-[#757575] bg-white" />
        <div className="mt-[8px] flex h-[25px] items-center bg-[#6fb536] text-white">
          <span className="flex h-full w-[56px] items-center bg-[#578c2a] pl-[4px]"><FaArrowDownShortWide className="mr-[6px] h-[12px] w-[12px]" />Nr.</span>
          <span className="flex h-full w-[185px] items-center border-r border-[#5c9a2e] pl-[4px]"><FaSort className="mr-[5px] h-[12px] w-[7px]" />Name</span>
        </div>
        {rows.map(([nr, name], i) => (
          <div key={nr} className={(i === 0 ? "bg-[#e9ea8f]" : i % 2 ? "bg-white" : "bg-[#f2f2f2]") + " flex h-[26px] items-center border-b border-[#dee2e6] pl-[4px] text-black"}>
            <span className="w-[56px] pt-[2px]">{nr}</span>
            <span className="flex-1 pt-[2px]">{name}</span>
            <span className="flex h-[25px] text-[#6c757d]">
              <span className="flex w-[17px] items-center justify-center rounded-l-[5px] border border-[#6c757d]"><CopyIcon /></span>
              <span className="-ml-px flex w-[20px] items-center justify-center border border-[#6c757d] text-[11px]"><FaPenToSquare /></span>
              <span className="-ml-px flex w-[17px] items-center justify-center bg-[#5fab86] text-[11px]"><FaFloppyDisk className={i === 0 ? "text-[#f4f4c0]" : "text-white"} /></span>
              <span className="flex w-[16px] items-center justify-center rounded-r-[5px] bg-[#dc3545] text-[11px] text-white"><FaXmark /></span>
            </span>
          </div>
        ))}
        <div className="mt-[8px] flex h-[29px] items-center justify-center rounded-[6px] border border-[#6fb536] bg-white/60">Showing 1 to 5 from 5</div>
        <div className="mt-[8px] flex h-[23px] w-[18px] items-center justify-center bg-[#578c2a] text-white">1</div>
        <div className="mt-auto mb-[20px] flex flex-col gap-[2px] text-[20.5px] text-[#d6d6d6]">
          {["Layer tree", "Sketches", "Search router"].map((s) => (
            <div key={s} className="flex h-[31px] items-center bg-[#787878] pl-[11px]">{s}</div>
          ))}
        </div>
      </div>
    </div>
  );
}

/* ---------- map overlays ---------- */

function ZoomBar() {
  return (
    <div className="absolute top-[40px] right-[40px] flex w-[60px] flex-col items-center">
      <div className="flex h-[60px] w-[60px] items-center justify-center rounded-full bg-[#eee]">
        <svg viewBox="0 0 60 60" className="h-[60px] w-[60px]" fill="none" stroke="#555" strokeWidth="2.200">
          <path d="M30 19 L38 38 L30 34 L22 38 Z" fill="#555" stroke="none" />
          <path d="M14 46 Q4 34 10 22 M46 46 Q56 34 50 22" />
          <path d="M5 24 L13 16 L12 27 Z M55 24 L47 16 L48 27 Z" fill="#555" stroke="none" />
        </svg>
      </div>
      <div className="mt-[9px] flex h-[390px] w-[34px] flex-col items-center rounded-[3px] bg-[#eee] pt-[8px] text-[#555]">
        <FaEarthAmericas className="h-[21px] w-[21px]" />
        <FaHouse className="mt-[5px] h-[21px] w-[24px]" />
        <span className="mt-[6px] flex h-[18px] w-[18px] items-center justify-center rounded-[2px] border-2 border-[#555]"><Plus className="h-[12px] w-[12px]" strokeWidth={4} /></span>
        <div className="mt-[4px] flex flex-col items-center">
          {Array.from({ length: 15 }, (_, i) => (
            <React.Fragment key={i}>
              {i > 0 && <i className="h-[9px] border-l-2 border-dotted border-[#666]" />}
              <i className={i === 2 ? "h-[10px] w-[10px] rounded-full bg-[#555]" : "h-[10px] w-[10px] rounded-full border border-[#666] bg-[#eee]"} />
            </React.Fragment>
          ))}
        </div>
        <span className="mt-[4px] flex h-[18px] w-[18px] items-center justify-center rounded-[2px] border-2 border-[#555]"><i className="h-[2px] w-[8px] bg-[#555]" /></span>
      </div>
    </div>
  );
}

const houseRows = [
  "M178 35 L152 60 M214 190 L165 290", "M245 110 L330 10", "M330 200 L385 130", "M300 195 L345 150",
  "M175 235 L210 165", "M212 290 L275 215", "M395 205 L425 120", "M12 30 L0 60", "M212 20 L240 70", "M250 10 L300 30", "M425 20 L440 60", "M300 250 L400 290",
  "M360 225 L400 245", "M225 120 L265 160", "M435 110 L440 260", "M285 100 L395 -5",
];

function Overview() {
  return (
    <div className="absolute right-[40px] bottom-[19px] flex items-end gap-[7px]">
      <span className="flex h-[26px] w-[22px] items-center justify-center rounded-[3px] bg-[#c8c8c8]"><i className="h-[2px] w-[10px] bg-[#444]" /></span>
      <div className="h-[100px] w-[200px] border border-[#8a8a8a]">
        <svg viewBox="0 0 448 298" preserveAspectRatio="none" className="h-full w-full">
          <rect width="448" height="298" fill="#f3f0df" />
          <path d="M0 0 H185 L190 90 L130 298 H0 Z" fill="#d3eebb" />
          <path d="M270 60 L370 -10 L400 0 L320 110 Z M400 35 L290 180 L330 190 L410 70 Z M190 110 L250 160 L230 190 L165 190 Z M200 190 L130 298 H160 L240 200 Z" fill="#d3eebb" />
          <g fill="none" stroke="#ecdccb" strokeWidth="2.500">
            <path d="M0 30 Q60 60 90 0 M20 0 Q40 90 130 80 M0 110 Q80 60 150 120 M50 90 Q90 140 60 220 Q30 250 0 220 M100 20 Q120 120 80 200 M10 170 Q90 190 100 150 M150 60 Q110 130 120 190 M0 260 Q50 220 70 270 M150 0 Q160 60 130 80 M30 130 L60 290" />
          </g>
          <path d="M142 -5 Q180 45 176 70 Q150 110 140 130" fill="none" stroke="#bfdcf2" strokeWidth="15" />
          <path d="M150 105 Q135 180 120 208 L70 262 L50 270 L95 190 L102 165 L130 120 Z" fill="#bfdcf2" />
          <path d="M125 215 Q140 240 110 275 L85 298 M30 285 Q70 280 90 290" fill="none" stroke="#bfdcf2" strokeWidth="7" />
          <g fill="none" stroke="#d3cecc" strokeWidth="17" strokeDasharray="10 3">
            {houseRows.map((d) => <path key={d} d={d} />)}
          </g>
          <g fill="none" stroke="#fff" strokeWidth="8">
            <path d="M194 0 L186 86 L300 205 L410 268 H448 M186 90 L185 150 L120 298 M385 -5 L175 298 M405 0 L445 80 L425 110 L330 230 M405 95 L430 100 L415 298" />
          </g>
          <g fontFamily="'Noto Sans', sans-serif" fill="#444" stroke="#fff" strokeWidth="2" paintOrder="stroke">
            <text x="52" y="57" fontSize="20" textLength="78" lengthAdjust="spacingAndGlyphs">Sachs-Ring</text>
            <text x="0" y="118" fontSize="20" fill="#777" textLength="66" lengthAdjust="spacingAndGlyphs">anischer</text>
            <text x="0" y="146" fontSize="20" fill="#777" textLength="46" lengthAdjust="spacingAndGlyphs">Garten</text>
            <text transform="translate(199 66) rotate(-90)" fontSize="17">Venusb</text>
            <text transform="translate(260 160) rotate(-50)" fontSize="19" textLength="146" lengthAdjust="spacingAndGlyphs">Kurfürstenstraße</text>
          </g>
          <rect x="167" y="115" width="118" height="74" fill="none" stroke="#3c3c3c" strokeWidth="5" />
        </svg>
      </div>
    </div>
  );
}

/* ---------- dialog ---------- */

function Tag({ children, className = "" }: { children: React.ReactNode; className?: string }) {
  return (
    <span className={"flex h-[19px] items-center rounded-[4px] border border-[#aaa] bg-[#e4e4e4] px-[5px] text-[11px] whitespace-nowrap text-[#7a7a7a] " + className}>
      <span className="mr-[3px] text-[9.5px] font-bold text-[#999]">×</span>{children}
    </span>
  );
}

function Dialog() {
  const label = "h-[16px] leading-[16px] text-[11.35px] font-bold text-[#666]";
  const plain = "h-[16px] leading-[16px]";
  const field = "mt-[7px] flex border border-[#dcdfe3] bg-white pl-[10px] text-[#444b52]";
  const btn = "flex h-[25px] items-center justify-center rounded-[4px] border text-[13.4px] text-white ";
  return (
    <div className="absolute top-[24px] left-[685px] z-20 flex h-[778px] w-[550px] flex-col border border-[#aaa] bg-white text-[10.95px] text-[#888]">
      <div className="flex h-[35px] items-center justify-between bg-[#578c2a] pr-[11px] pb-[2px] pl-[15px] font-['Liberation_Sans'] text-[15.9px] text-white">
        point test suite<X className="h-[14px] w-[14px]" strokeWidth={4} />
      </div>
      <div className="flex h-[27px] text-white">
        <span className="flex w-[124px] items-center justify-center bg-[#578c2a] pb-px">1. Basic information</span>
        <span className="flex w-[143px] items-center justify-center bg-[#6fb536] pb-px">2. Personal information</span>
      </div>
      <div className="flex flex-1 flex-col px-[15px] pt-[15px]">
        <div className={plain}>Welcome to the digitize demo. Try the new Mapbender feature!</div>
        <div className={"mt-[14px] " + label}>Read more at the <span className="text-[10.95px] font-normal text-[#888]">Mapbender-Webseite</span></div>
        <div className={label}>user_name</div>
        <div className={"mt-[7px] " + plain}>anon.</div>
        <div className="mt-[14px] flex h-[16px] items-center text-[11.4px] font-bold text-[#008000]">Name <FaCircleInfo className="ml-[3px]" /><FaClipboard className="ml-px" /></div>
        <div className={field + " h-[28px] items-center"}>Haltestelle</div>
        <div className={"mt-[13px] " + label}>Title</div>
        <div className={field + " h-[28px] items-center"}>Bushaltestelle am Botanischen Garten</div>
        <div className={"mt-[13px] " + label}>Abstract</div>
        <div className={field + " relative h-[61px] pt-[5px]"}>Bushaltestelle am Botanischen Garten Bonn
          <svg viewBox="0 0 10 10" className="absolute right-[1px] bottom-[1px] h-[10px] w-[10px]" stroke="#777" strokeWidth=".9"><path d="M0 10 L10 0 M3 10 L10 3 M6 10 L10 6" /></svg>
        </div>
        <div className="mt-[14px] flex h-[16px] items-center text-[11.4px] font-bold text-[#666]">Type <FaCircleInfo className="ml-[3px]" /></div>
        <div className="relative mt-[6px] flex h-[32px] items-center rounded-t-[4px] border border-black pl-[5px]">
          <Tag className="w-[96px]">Administration</Tag><Tag className="ml-[5px] w-[72px]">University</Tag>
          <i className="ml-[5px] h-[16px] w-px bg-black" />
          <div className="absolute top-[31px] left-0 z-10 flex h-[31px] w-[518px] items-center rounded-b-[4px] border border-t-0 border-[#aaa] bg-white pt-px pl-[6px] text-[11px]">You can only select 2 items</div>
        </div>
        <div className={"mt-[25px] " + label}>Mapbender user/group</div>
        <div className={"mt-[7px] " + plain}>user: anon. group:</div>
        <div className={"mt-[13px] " + label}>Text with function type:text</div>
        <div className={"mt-[20px] " + label}>Radiobuttons - Choose one</div>
        <div className="mt-[6px] flex h-[17px] items-center"><i className="mr-[10px] mb-px h-[14px] w-[14px] rounded-full border-2 border-[#8f8f9d] bg-white" />Option 1</div>
        <div className="flex h-[17px] items-center"><i className="mr-[10px] mb-px flex h-[14px] w-[14px] items-center justify-center rounded-full border-2 border-[#4a90d9] bg-white"><i className="h-[6px] w-[6px] rounded-full bg-[#4a90d9]" /></i>Option 2</div>
        <div className={"mt-[13px] " + label}>Select at least one (multiple choice)</div>
        <div className="mt-[7px] flex h-[32px] items-center rounded-[4px] border border-[#aaa] pb-[2px] pl-[5px]">
          <Tag className="w-[65px]">Option 1</Tag><Tag className="ml-[5px] w-[64px]">Option 3</Tag>
        </div>
        <div className="mt-[43px] flex justify-end gap-[5px]">
          <span className={btn + "w-[52px] border-[#578c2a] bg-[#6fb536]"}>Copy</span>
          <span className={btn + "w-[51px] border-[#578c2a] bg-[#6fb536]"}>Print</span>
          <span className={btn + "w-[51px] border-[#578c2a] bg-[#6fb536]"}>Save</span>
          <span className={btn + "w-[61px] border-[#a33] bg-[#d66464]"}>Delete</span>
          <span className={btn + "w-[62px] border-[#578c2a] bg-[#6fb536]"}>Cancel</span>
        </div>
      </div>
      <i className="absolute -right-px -bottom-px h-[10px] w-[10px] border-r-2 border-b-2 border-[#222]" />
    </div>
  );
}

export default function App() {
  return (
    <div className="flex h-[1080px] w-[1920px] flex-col overflow-hidden font-['Noto_Sans',sans-serif]">
      <SystemBar />
      <TabBar />
      <AddressBar />
      <BookmarkBar />
      <div className="relative flex flex-1 flex-col overflow-hidden">
        <MapCanvas />
        <AppHeader />
        <div className="flex flex-1">
          <Sidebar />
          <div className="relative flex h-[39px] w-[33px] items-center justify-center rounded-br-[4px] bg-[#c8c8c8]">
            <span className="flex w-[17px] flex-col gap-[4px]"><i className="h-[2px] rounded bg-[#333]" /><i className="h-[2px] rounded bg-[#333]" /><i className="h-[2px] rounded bg-[#333]" /></span>
          </div>
          <div className="relative flex-1">
            <ZoomBar />
            <Overview />
          </div>
        </div>
        <AppFooter />
        <Dialog />
      </div>
    </div>
  );
}
